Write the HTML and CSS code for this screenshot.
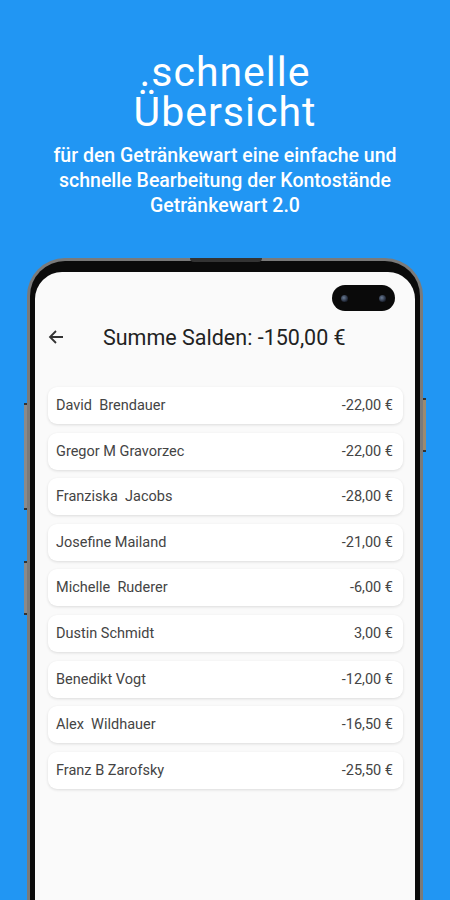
FILE: index.html
```html
<!DOCTYPE html>
<html lang="de">
<head>
    <meta charset="UTF-8">
    <meta name="viewport" content="width=device-width, initial-scale=1.0">
    <title>Getränkewart 2.0 - schnelle Übersicht</title>
    <link rel="stylesheet" href="styles.css">
</head>
<body>
    <header class="hero">
        <h1><span class="line">.schnelle</span><span class="line">Übersicht</span></h1>
        <p>für den Getränkewart eine einfache und<br>schnelle Bearbeitung der Kontostände<br>Getränkewart 2.0</p>
    </header>

    <div class="phone">
        <span class="btn btn-left-1"></span>
        <span class="btn btn-left-2"></span>
        <span class="btn btn-right"></span>
        <span class="speaker"></span>
        <div class="screen">
            <div class="camera">
                <span class="lens"></span>
                <span class="lens"></span>
            </div>
            <div class="appbar">
                <svg class="back" width="16" height="16" viewBox="0 0 16 16">
                    <path d="M15 8H2M8 2L2 8l6 6" fill="none" stroke="#333" stroke-width="1.8"/>
                </svg>
                <span class="title">Summe Salden: -150,00 €</span>
            </div>
            <ul class="list">
                <li class="row"><span>David&nbsp; Brendauer</span><span>-22,00 €</span></li>
                <li class="row"><span>Gregor M Gravorzec</span><span>-22,00 €</span></li>
                <li class="row"><span>Franziska&nbsp; Jacobs</span><span>-28,00 €</span></li>
                <li class="row"><span>Josefine Mailand</span><span>-21,00 €</span></li>
                <li class="row"><span>Michelle&nbsp; Ruderer</span><span>-6,00 €</span></li>
                <li class="row"><span>Dustin Schmidt</span><span>3,00 €</span></li>
                <li class="row"><span>Benedikt Vogt</span><span>-12,00 €</span></li>
                <li class="row"><span>Alex&nbsp; Wildhauer</span><span>-16,50 €</span></li>
                <li class="row"><span>Franz B Zarofsky</span><span>-25,50 €</span></li>
            </ul>
        </div>
    </div>
</body>
</html>
```

FILE: styles.css
```css
body {
    margin: 0;
    width: 450px;
    height: 900px;
    overflow: hidden;
    background-color: #2196f3;
    font-family: Roboto, "Noto Sans", sans-serif;
}
.hero {
    color: #fff;
    text-align: center;
    padding-top: 52px;
}
h1 {
    margin: 0;
    font-size: 41px;
    font-weight: 400;
    line-height: 40px;
    letter-spacing: 1px;
}
h1 .line {
    display: block;
    height: 40px;
}
.hero p {
    margin: 11px 0 0;
    font-size: 19.5px;
    font-weight: 500;
    line-height: 25px;
}
.phone {
    position: relative;
    width: 380px;
    height: 628px;
    margin: 40px auto 0;
    padding: 11px 5px 0;
    background-color: #0b0b0b;
    border: 3px solid #7a7a7a;
    border-bottom: none;
    border-radius: 38px 38px 0 0;
}
.btn {
    position: absolute;
    width: 3px;
    background-color: #8a8a8a;
    border-top: 2px solid #333;
    border-bottom: 2px solid #333;
}
.btn-left-1 {
    left: -6px;
    top: 142px;
    height: 103px;
}
.btn-left-2 {
    left: -6px;
    top: 300px;
    height: 50px;
}
.btn-right {
    right: -6px;
    top: 137px;
    height: 50px;
    background-color: #9a8a70;
}
.speaker {
    position: absolute;
    left: 160px;
    top: -3px;
    width: 72px;
    height: 4px;
    background-color: #333;
    border-radius: 0 0 4px 4px;
}
.screen {
    position: relative;
    height: 100%;
    background-color: #fafafa;
    border-radius: 27px 27px 0 0;
}
.camera {
    position: absolute;
    top: 13px;
    right: 20px;
    width: 63px;
    height: 26px;
    background-color: #0a0a0a;
    border-radius: 13px;
    display: flex;
    justify-content: space-between;
    align-items: center;
    padding: 0 9px;
    box-sizing: border-box;
}
.lens {
    width: 7px;
    height: 7px;
    border-radius: 50%;
    background: radial-gradient(circle at 40% 40%, #6a7c95, #1c2230 70%);
}
.appbar {
    display: flex;
    align-items: center;
    height: 42px;
    padding: 44px 0 0 13px;
}
.back {
    margin-right: 39px;
}
.title {
    font-size: 21.5px;
    color: #222;
}
.list {
    list-style: none;
    margin: 29px 0 0;
    padding: 0 12px 0 13px;
}
.row {
    display: flex;
    justify-content: space-between;
    align-items: center;
    height: 37px;
    margin-bottom: 8.6px;
    padding: 0 10px 0 8px;
    background-color: #fff;
    border-radius: 9px;
    box-shadow: 0 1px 3px rgba(0, 0, 0, 0.12);
    font-size: 14.5px;
    color: #444;
}
```
